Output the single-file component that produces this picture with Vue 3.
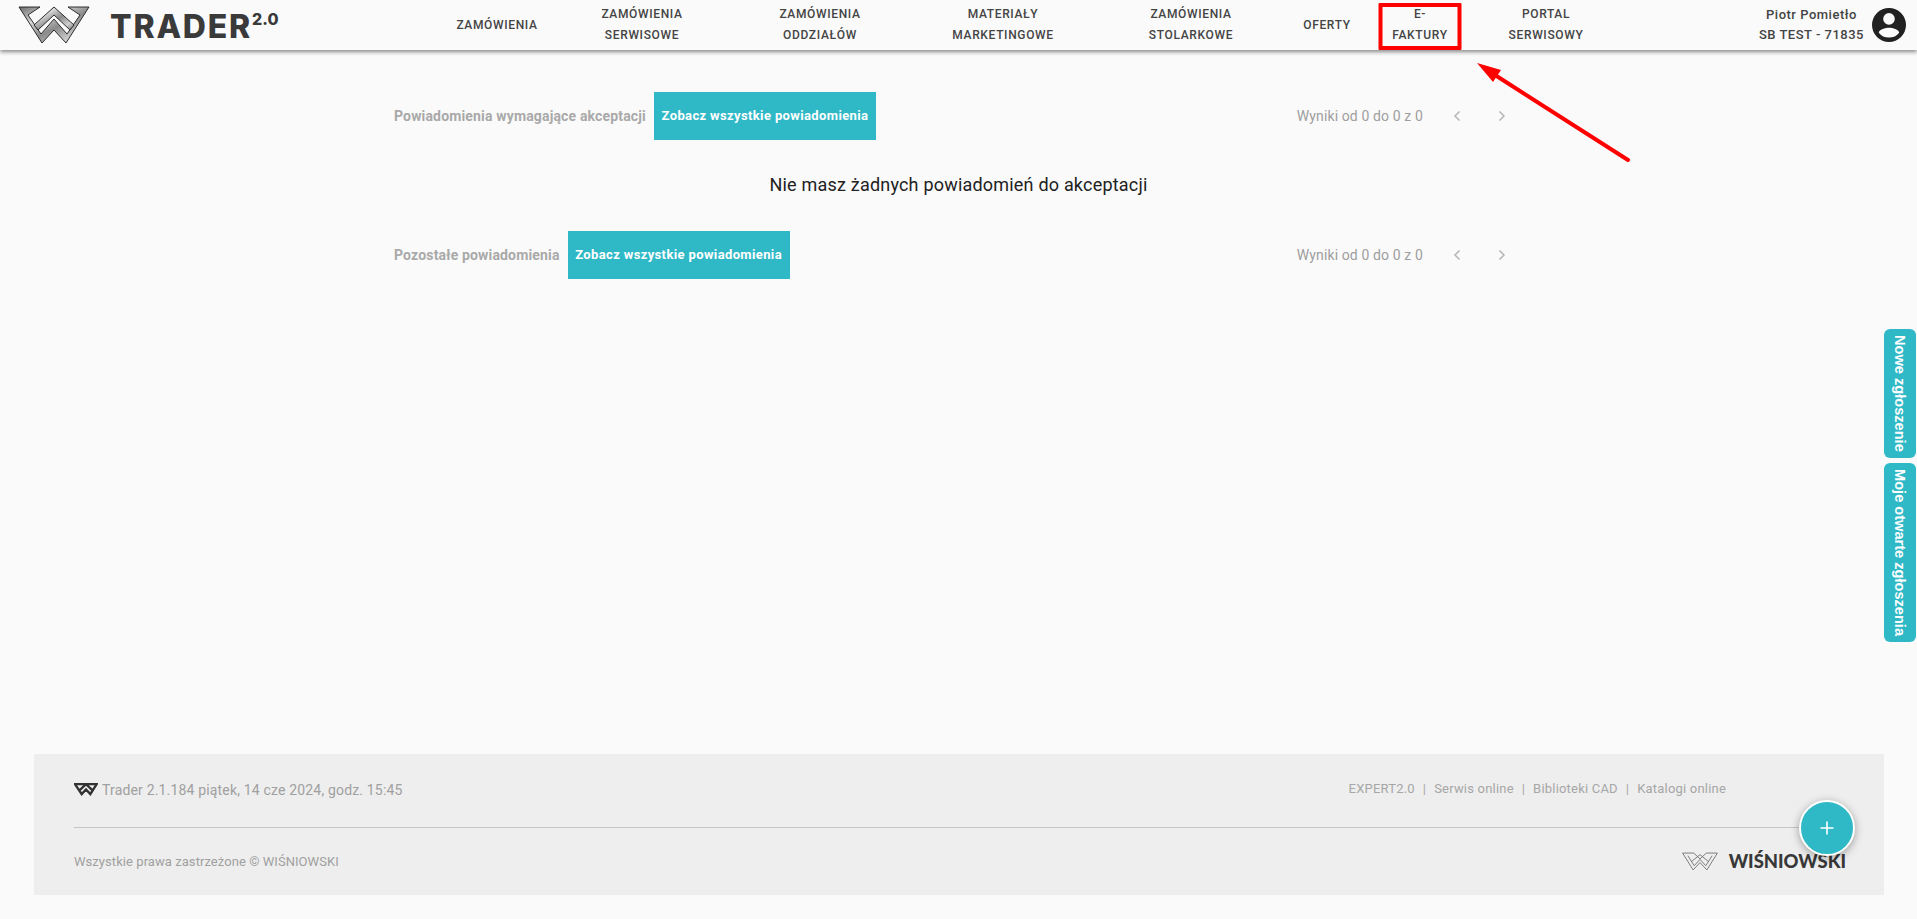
<script setup>
const navItems = [
  { lines: ['Zamówienia'], offset: 0 },
  { lines: ['Zamówienia', 'serwisowe'], offset: 55 },
  { lines: ['Zamówienia', 'oddziałów'], offset: 88 },
  { lines: ['Materiały', 'marketingowe'], offset: 93 },
  { lines: ['Zamówienia', 'stolarkowe'], offset: 98 },
  { lines: ['Oferty'], offset: 46 },
  { lines: ['E-', 'faktury'], offset: 3, marked: true },
  { lines: ['Portal', 'serwisowy'], offset: 36 }
]

const sections = [
  { title: 'Powiadomienia wymagające akceptacji' },
  { title: 'Pozostałe powiadomienia' }
]

const footerLinks = ['EXPERT2.0', 'Serwis online', 'Biblioteki CAD', 'Katalogi online']
</script>

<template>
  <div class="page">
    <header class="topbar">
      <div class="brand">
        <svg class="brand-logo" viewBox="0 0 72 38" aria-hidden="true">
          <defs>
            <linearGradient id="silver" x1="0" y1="0" x2="1" y2="1">
              <stop offset="0" stop-color="#6a6a6a" />
              <stop offset="0.3" stop-color="#d8d8d8" />
              <stop offset="0.55" stop-color="#8a8a8a" />
              <stop offset="0.8" stop-color="#cfcfcf" />
              <stop offset="1" stop-color="#707070" />
            </linearGradient>
          </defs>
          <g fill="url(#silver)" stroke="#1c1c1c" stroke-width="0.9" stroke-linejoin="miter">
            <path d="M1 1H22L10 9L23 28L36 13L49 28L62 9L50 1H71L48 37L36 24L24 37Z" />
            <path d="M36 1L56 19L52 24L36 9L20 24L16 19Z" />
          </g>
        </svg>
        <span class="brand-name">TRADER<sup>2.0</sup></span>
      </div>

      <nav class="nav">
        <a
          v-for="item in navItems"
          :key="item.lines[0] + item.lines[1]"
          class="nav-item"
          :class="{ marked: item.marked }"
          :style="{ marginLeft: item.offset + 'px' }"
        >
          <span v-for="line in item.lines" :key="line">{{ line }}</span>
        </a>
      </nav>

      <div class="user">
        <div class="user-text">
          <span>Piotr Pomietło</span>
          <span>SB TEST - 71835</span>
        </div>
        <svg class="avatar" viewBox="0 0 24 24" aria-hidden="true">
          <path d="M12 0a12 12 0 1 0 0 24a12 12 0 0 0 0-24zm0 3.6a4.1 4.1 0 1 1 0 8.2a4.1 4.1 0 0 1 0-8.2zm0 17.3c-3 0-5.6-1.3-7.2-3.5c.1-2.2 4.8-3.4 7.2-3.4s7.100 1.200 7.200 3.400c-1.600 2.200-4.200 3.500-7.200 3.500z" fill="#212121" />
        </svg>
      </div>
    </header>

    <main class="content">
      <template v-for="(section, i) in sections" :key="section.title">
        <div class="row">
          <div class="row-left">
            <span class="row-title">{{ section.title }}</span>
            <button class="show-all">Zobacz wszystkie powiadomienia</button>
          </div>
          <div class="pager">
            <span>Wyniki od 0 do 0 z 0</span>
            <svg class="chev first" viewBox="0 0 8 12"><path d="M6.500 1.500L2 6l4.500 4.500" /></svg>
            <svg class="chev" viewBox="0 0 8 12"><path d="M1.500 1.500L6 6l-4.500 4.500" /></svg>
          </div>
        </div>
        <p v-if="i === 0" class="empty">Nie masz żadnych powiadomień do akceptacji</p>
      </template>
    </main>

    <aside class="side-tabs">
      <a class="side-tab first">Nowe zgłoszenie</a>
      <a class="side-tab second">Moje otwarte zgłoszenia</a>
    </aside>

    <footer class="footer">
      <div class="footer-top">
        <div class="version">
          <svg class="mini-logo" viewBox="0 0 72 38" aria-hidden="true">
            <path d="M3 3H68L49 33L36 19L23 33Z M18 20L36 3L54 20" fill="none" stroke="#333" stroke-width="7" />
          </svg>
          <span>Trader 2.1.184 piątek, 14 cze 2024, godz. 15:45</span>
        </div>
        <div class="links">
          <template v-for="(link, i) in footerLinks" :key="link">
            <span v-if="i > 0" class="sep">|</span>
            <a>{{ link }}</a>
          </template>
        </div>
      </div>
      <div class="footer-bottom">
        <span class="copyright">Wszystkie prawa zastrzeżone © WIŚNIOWSKI</span>
        <div class="company">
          <svg class="company-logo" viewBox="0 0 72 38" aria-hidden="true">
            <g fill="none" stroke="#777" stroke-width="1.800">
              <path d="M3 3H24L36 14L48 3H69L49 35L36 21L23 35Z" />
              <path d="M13 8L25 27L36 15L47 27L59 8" />
              <path d="M20 19L36 6L52 19" />
            </g>
          </svg>
          <span>WIŚNIOWSKI</span>
        </div>
      </div>
      <button class="fab" aria-label="Dodaj">
        <svg viewBox="0 0 16 16"><path d="M8 1.500v13M1.500 8h13" /></svg>
      </button>
    </footer>

    <svg class="arrow" viewBox="0 0 170 110" aria-hidden="true">
      <path d="M151 98L18 13" stroke="#f00" stroke-width="4" stroke-linecap="round" fill="none" />
      <path d="M0 1L24 8L16 20Z" fill="#f00" />
    </svg>
  </div>
</template>

<style>
html,
body {
  margin: 0;
  background: #fafafa;
}
</style>

<style scoped>
.page {
  position: relative;
  display: flex;
  flex-direction: column;
  min-height: 919px;
  overflow: hidden;
  background: #fafafa;
  font-family: Roboto, "Noto Sans", sans-serif;
  color: #212121;
}

.topbar {
  display: flex;
  align-items: center;
  height: 50px;
  padding-right: 11px;
  background: #fafafa;
  box-shadow: 0 2px 4px rgba(0, 0, 0, 0.45);
}

.brand {
  display: flex;
  align-items: center;
  width: 452px;
  flex: none;
  padding-left: 18px;
  box-sizing: border-box;
}

.brand-logo {
  width: 72px;
  height: 38px;
}

.brand-name {
  margin-left: 20px;
  font-family: Inter, sans-serif;
  font-size: 32px;
  font-weight: 800;
  letter-spacing: 1.800px;
  line-height: 1;
  color: #3a3a3a;
  position: relative;
  top: 2px;
}

.brand-name sup {
  font-size: 16px;
  font-weight: 800;
  letter-spacing: 0;
  vertical-align: 13px;
  line-height: 0;
}

.nav {
  display: flex;
  align-items: center;
  height: 100%;
}

.nav-item {
  position: relative;
  display: flex;
  flex-direction: column;
  align-items: center;
  justify-content: center;
  flex: none;
  width: 90px;
  height: 100%;
  font-size: 12px;
  font-weight: 500;
  line-height: 21px;
  letter-spacing: 0.65px;
  text-transform: uppercase;
  white-space: nowrap;
  color: #444;
}

.nav-item.marked::after {
  content: "";
  position: absolute;
  top: 3px;
  bottom: 0;
  left: 50%;
  width: 83px;
  transform: translateX(-50%);
  border: 4px solid #f00;
  box-sizing: border-box;
  border-radius: 1px;
}

.user {
  display: flex;
  align-items: center;
  gap: 8px;
  margin-left: auto;
}

.user-text {
  display: flex;
  flex-direction: column;
  align-items: center;
  font-size: 13px;
  font-weight: 500;
  line-height: 20px;
  letter-spacing: 0.5px;
  color: #444;
}

.avatar {
  width: 34px;
  height: 34px;
}

.content {
  width: 1129px;
  margin: 41px auto 0 394px;
}

.row {
  display: flex;
  align-items: center;
  justify-content: space-between;
  height: 49px;
}

.row-left {
  display: flex;
  align-items: center;
  gap: 8px;
}

.row-title {
  font-size: 14px;
  font-weight: 700;
  letter-spacing: 0.16px;
  color: #a9a9a9;
}

.show-all {
  height: 48px;
  width: 222px;
  padding: 0;
  border: 0;
  background: #2fb8c6;
  color: #fff;
  font-family: inherit;
  font-size: 13px;
  font-weight: 700;
  letter-spacing: 0.37px;
}

.pager {
  display: flex;
  align-items: center;
  font-size: 14px;
  letter-spacing: 0.12px;
  color: #9e9e9e;
}

.chev {
  width: 8px;
  height: 12px;
  margin-left: 37px;
  margin-right: 17px;
  fill: none;
  stroke: #b5b5b5;
  stroke-width: 1.500;
}

.chev.first {
  margin-left: 30px;
  margin-right: 0;
}

.empty {
  margin: 0;
  padding: 26px 0 26px;
  text-align: center;
  font-size: 18px;
  line-height: 38px;
  letter-spacing: 0.2px;
  color: #212121;
}

.side-tabs {
  position: absolute;
  top: 329px;
  right: 1px;
  display: flex;
  flex-direction: column;
  gap: 5px;
}

.side-tab {
  display: flex;
  align-items: center;
  justify-content: center;
  width: 32px;
  writing-mode: vertical-rl;
  border-radius: 6px;
  background: #2fb8c6;
  color: #fff;
  font-family: "Liberation Sans", sans-serif;
  font-size: 14.6px;
  font-weight: 700;
}

.side-tab.first {
  height: 129px;
}

.side-tab.second {
  height: 179px;
}

.footer {
  position: relative;
  margin: auto 33px 24px 34px;
  height: 141px;
  padding: 0 40px;
  background: #eee;
  color: #a0a0a0;
}

.footer-top {
  display: flex;
  align-items: center;
  justify-content: space-between;
  height: 73px;
  padding-right: 118px;
  border-bottom: 1px solid #c6c6c6;
}

.version {
  display: flex;
  align-items: center;
  gap: 4px;
  font-size: 14px;
  letter-spacing: 0.17px;
  margin-top: -2px;
}

.mini-logo {
  width: 24px;
  height: 13px;
}

.links {
  display: flex;
  gap: 8px;
  font-size: 13px;
  letter-spacing: 0.2px;
  color: #a6a6a6;
  margin-top: -4px;
}

.footer-bottom {
  display: flex;
  align-items: center;
  justify-content: space-between;
  height: 67px;
}

.copyright {
  font-size: 13px;
  letter-spacing: 0.06px;
}

.company {
  display: flex;
  align-items: center;
  gap: 10px;
  font-family: Lato, sans-serif;
  font-size: 18.4px;
  font-weight: 900;
  color: #383838;
  margin-top: -1px;
  margin-right: -2px;
}

.company-logo {
  width: 38px;
  height: 21px;
}

.fab {
  position: absolute;
  right: 29px;
  top: 46px;
  display: flex;
  align-items: center;
  justify-content: center;
  width: 56px;
  height: 56px;
  padding: 0;
  border: 2px solid #fff;
  border-radius: 50%;
  background: #2fb8c6;
  box-shadow: 0 2px 8px rgba(0, 0, 0, 0.35);
}

.fab svg {
  width: 16px;
  height: 16px;
  fill: none;
  stroke: #fff;
  stroke-width: 1.600;
}

.arrow {
  position: absolute;
  left: 1477px;
  top: 62px;
  width: 170px;
  height: 110px;
}
</style>
